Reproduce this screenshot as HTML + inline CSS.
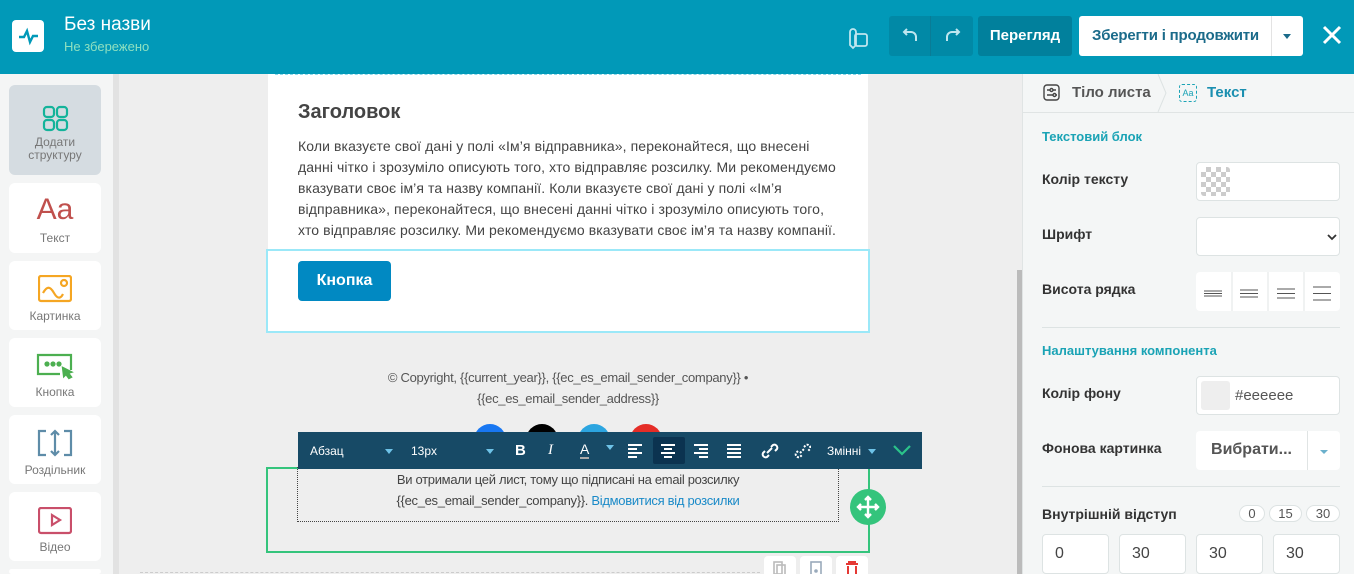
<!DOCTYPE html>
<html><head><meta charset="utf-8"><style>
*{box-sizing:border-box;margin:0;padding:0}
html,body{width:1354px;height:574px;overflow:hidden}
body{position:relative;background:#eee;font-family:"Liberation Sans",sans-serif;}
.abs{position:absolute}
.hdr{left:0;top:0;width:1354px;height:74px;background:#0199b8}
.side{left:0;top:74px;width:113px;height:500px;background:#f4f5f5}
.sb{left:113px;top:74px;width:6px;height:500px;background:#e2e2e2}
.tile{position:absolute;left:9px;width:92px;background:#fff;border-radius:6px;text-align:center;font-size:12px;color:#777}
.tile span{position:absolute;left:0;right:0}
.rp{left:1022px;top:74px;width:332px;height:500px;background:#f4f6f6;border-left:1px solid #e0e4e4}
.lbl{position:absolute;left:1042px;font-size:14px;font-weight:bold;color:#333}
.inp{position:absolute;background:#fff;border:1px solid #dde3e3;border-radius:4px}
.sec{position:absolute;left:1042px;font-size:13px;font-weight:bold;color:#1aa3b5}
</style></head><body>
<div class="abs hdr"></div>
<div class="abs" style="left:12px;top:20px;width:32px;height:32px;background:#fff;border-radius:4px"><svg width="32" height="32"><path d="M7 17h5l3-6 3 11 3-6h5" fill="none" stroke="#0199b8" stroke-width="2.4"/></svg></div>
<div class="abs" style="left:64px;top:14px;color:#fff;font-size:19px">Без назви</div>
<div class="abs" style="left:64px;top:39px;color:#8ee0c0;font-size:13px">Не збережено</div>
<svg class="abs" style="left:846px;top:26px" width="24" height="24"><rect x="9" y="8" width="12" height="12" rx="2" fill="none" stroke="#bfe6ef" stroke-width="1.8"/><path d="M4 6v13l3 3 3-3V6a3 3 0 0 0-6 0z" fill="none" stroke="#bfe6ef" stroke-width="1.8"/></svg>
<div class="abs" style="left:889px;top:16px;width:84px;height:40px;background:#0189a6;border-radius:3px"></div>
<div class="abs" style="left:930px;top:16px;width:1px;height:40px;background:#0a7c96"></div>
<svg class="abs" style="left:902px;top:27px" width="18" height="18" fill="none" stroke="#bfe6ef" stroke-width="2"><path d="M5 2L2 5l3 3M2 5h7a5 5 0 0 1 5 5v4"/></svg>
<svg class="abs" style="left:943px;top:27px" width="18" height="18" fill="none" stroke="#bfe6ef" stroke-width="2"><path d="M13 2l3 3-3 3M16 5H9a5 5 0 0 0-5 5v4"/></svg>
<div class="abs" style="left:978px;top:16px;width:94px;height:40px;background:#01809c;border-radius:3px;color:#fff;font-size:15px;font-weight:bold;text-align:center;line-height:40px">Перегляд</div>
<div class="abs" style="left:1079px;top:16px;width:224px;height:40px;background:#fff;border-radius:3px"></div>
<div class="abs" style="left:1092px;top:27px;color:#1b6b8a;font-size:15px;font-weight:bold;letter-spacing:-0.2px">Зберегти і продовжити</div>
<div class="abs" style="left:1271px;top:16px;width:1px;height:40px;background:#e3e3e3"></div>
<div class="abs" style="left:1283px;top:34px;border:4px solid transparent;border-top:5px solid #1b6b8a"></div>
<svg class="abs" style="left:1322px;top:25px" width="20" height="20"><path d="M2 2L18 18M18 2L2 18" stroke="#fff" stroke-width="3"/></svg>

<div class="abs side"></div><div class="abs sb"></div>
<div class="tile" style="top:85px;height:90px;background:#d5dce1"><svg class="abs" style="left:33px;top:20px" width="27" height="27" fill="none" stroke="#14b39a" stroke-width="2.2"><rect x="2" y="2" width="10" height="10" rx="3"/><rect x="15" y="2" width="10" height="10" rx="3"/><rect x="2" y="15" width="10" height="10" rx="3"/><rect x="15" y="15" width="10" height="10" rx="3"/></svg><span style="top:51px;line-height:13px">Додати<br>структуру</span></div>
<div class="tile" style="top:183px;height:70px"><span style="top:10px;font-size:30px;color:#c0504d">Aa</span><span style="top:48px">Текст</span></div>
<div class="tile" style="top:261px;height:69px"><svg class="abs" style="left:29px;top:14px" width="34" height="28" fill="none" stroke="#f5a623" stroke-width="2.2"><rect x="1" y="1" width="32" height="25" rx="2"/><path d="M5 18c4-7 7-7 11 0s7 5 9 1"/><circle cx="26" cy="8" r="3"/></svg><span style="top:48px">Картинка</span></div>
<div class="tile" style="top:338px;height:69px"><svg class="abs" style="left:27px;top:15px" width="38" height="28" fill="none" stroke="#4caf50" stroke-width="2.2"><path d="M24 21H2V2h33v15"/><circle cx="11" cy="11" r="1.5" fill="#4caf50"/><circle cx="17" cy="11" r="1.5" fill="#4caf50"/><circle cx="23" cy="11" r="1.5" fill="#4caf50"/><path d="M27 15l8 4-3 1 3 4-2 1-3-4-2 2z" fill="#4caf50"/></svg><span style="top:47px">Кнопка</span></div>
<div class="tile" style="top:415px;height:69px"><svg class="abs" style="left:28px;top:14px" width="36" height="28" fill="none" stroke="#5e8ca8" stroke-width="2.2"><path d="M9 2H2v24h7M27 2h7v24h-7M18 2v24M14 6l4-4 4 4M14 22l4 4 4-4"/></svg><span style="top:48px">Роздільник</span></div>
<div class="tile" style="top:492px;height:69px"><svg class="abs" style="left:29px;top:15px" width="34" height="28" fill="none" stroke="#c94f6a" stroke-width="2.2"><rect x="1" y="1" width="32" height="25" rx="2"/><path d="M14 8l8 5-8 5z"/></svg><span style="top:48px">Відео</span></div>
<div class="tile" style="top:569px;height:5px"></div>

<!-- canvas -->
<div class="abs" style="left:268px;top:74px;width:600px;height:176px;background:#fff"></div>
<div class="abs" style="left:275px;top:74px;width:586px;height:2px;border-top:1px dashed #8ed8e8"></div>
<div class="abs" style="left:298px;top:101px;font-size:20px;font-weight:bold;color:#444">Заголовок</div>
<div class="abs" style="left:298px;top:136px;white-space:nowrap;font-size:14px;line-height:21px;color:#444;letter-spacing:0.1px">Коли вказуєте свої дані у полі «Ім’я відправника», переконайтеся, що внесені<br>данні чітко і зрозуміло описують того, хто відправляє розсилку. Ми рекомендуємо<br>вказувати своє ім’я та назву компанії. Коли вказуєте свої дані у полі «Ім’я<br>відправника», переконайтеся, що внесені данні чітко і зрозуміло описують того,<br>хто відправляє розсилку. Ми рекомендуємо вказувати своє ім’я та назву компанії.</div>
<div class="abs" style="left:266px;top:249px;width:604px;height:84px;background:#fff;border:2px solid #9be8f8"></div>
<div class="abs" style="left:298px;top:261px;width:93px;height:40px;background:#0189c2;border-radius:4px;color:#fff;font-weight:bold;font-size:16px;text-align:center;line-height:40px">Кнопка</div>
<div class="abs" style="left:268px;top:367px;width:600px;text-align:center;font-size:13px;line-height:21px;color:#555;letter-spacing:-0.3px">© Copyright, {{current_year}}, {{ec_es_email_sender_company}} •<br>{{ec_es_email_sender_address}}</div>
<div class="abs" style="left:474px;top:424px;width:32px;height:32px;border-radius:50%;background:#1877f2"></div>
<div class="abs" style="left:526px;top:424px;width:32px;height:32px;border-radius:50%;background:#000"></div>
<div class="abs" style="left:578px;top:424px;width:32px;height:32px;border-radius:50%;background:#2ca5e0"></div>
<div class="abs" style="left:630px;top:424px;width:32px;height:32px;border-radius:50%;background:#e52d27"></div>
<div class="abs" style="left:266px;top:467px;width:604px;height:86px;border:2px solid #34c47c;background:#eee"></div>
<div class="abs" style="left:297px;top:467px;width:542px;height:55px;border:1px dotted #444;border-top:none"></div>
<div class="abs" style="left:297px;top:469px;width:542px;text-align:center;font-size:13px;line-height:21px;color:#444;letter-spacing:-0.3px">Ви отримали цей лист, тому що підписані на email розсилку<br>{{ec_es_email_sender_company}}. <span style="color:#1a8ac8">Відмовитися від розсилки</span></div>
<div class="abs" style="left:850px;top:489px;width:36px;height:36px;border-radius:50%;background:#34c47c"><svg width="36" height="36" fill="none" stroke="#fff" stroke-width="2.4"><path d="M18 8v20M8 18h20M15 11l3-3 3 3M15 25l3 3 3-3M11 15l-3 3 3 3M25 15l3 3-3 3"/></svg></div>
<div class="abs" style="left:298px;top:432px;width:624px;height:37px;background:#174a66"></div>
<div class="abs" style="left:310px;top:444px;color:#fff;font-size:12px">Абзац</div>
<div class="abs" style="left:385px;top:449px;border:4px solid transparent;border-top:5px solid #6ec3e8"></div>
<div class="abs" style="left:411px;top:444px;color:#fff;font-size:12px">13px</div>
<div class="abs" style="left:486px;top:449px;border:4px solid transparent;border-top:5px solid #6ec3e8"></div>
<div class="abs" style="left:515px;top:442px;color:#fff;font-size:15px;font-weight:bold">B</div>
<div class="abs" style="left:548px;top:442px;color:#fff;font-size:15px;font-style:italic;font-family:'Liberation Serif',serif">I</div>
<div class="abs" style="left:580px;top:441px;color:#fff;font-size:14px;border-bottom:2px solid #aaa;line-height:16px">A</div>
<div class="abs" style="left:606px;top:445px;border:4px solid transparent;border-top:5px solid #6ec3e8"></div>
<div class="abs" style="left:653px;top:437px;width:32px;height:27px;background:#0b3350;border-radius:2px"></div>
<svg class="abs" style="left:628px;top:443px" width="120" height="16" stroke="#fff" stroke-width="2"><path d="M0 2h14M0 6h9M0 10h14M0 14h9M33 2h14M36 6h8M33 10h14M36 14h8M66 2h14M71 6h9M66 10h14M71 14h9M99 2h14M99 6h14M99 10h14M99 14h14"/></svg>
<svg class="abs" style="left:761px;top:443px" width="50" height="16" fill="none" stroke="#fff" stroke-width="2"><path d="M6 10l5-5M4 8l-2 2a3 3 0 0 0 4 4l2-2M10 4l2-2a3 3 0 0 1 4 4l-2 2"/><path d="M39 10l5-5M37 8l-2 2a3 3 0 0 0 4 4l2-2M43 4l2-2a3 3 0 0 1 4 4l-2 2" stroke-dasharray="2 1.5"/></svg>
<div class="abs" style="left:827px;top:444px;color:#fff;font-size:12px">Змінні</div>
<div class="abs" style="left:868px;top:449px;border:4px solid transparent;border-top:5px solid #6ec3e8"></div>
<svg class="abs" style="left:893px;top:443px" width="18" height="14"><path d="M1 3l8 8 8-8" fill="none" stroke="#2bc48a" stroke-width="2.2"/></svg>
<div class="abs" style="left:764px;top:556px;width:32px;height:18px;background:#fff;border-radius:4px 4px 0 0"><svg width="32" height="18" fill="none" stroke="#bbb" stroke-width="1.6"><rect x="10" y="6" width="8" height="12"/><rect x="13" y="9" width="8" height="10"/></svg></div>
<div class="abs" style="left:800px;top:556px;width:32px;height:18px;background:#fff;border-radius:4px 4px 0 0"><svg width="32" height="18" fill="none" stroke="#9ab" stroke-width="1.6"><rect x="11" y="6" width="10" height="13"/><circle cx="16" cy="15" r="1" fill="#9ab"/></svg></div>
<div class="abs" style="left:836px;top:556px;width:32px;height:18px;background:#fff;border-radius:4px 4px 0 0"><svg width="32" height="18"><path d="M10 8h12M13 8V6h6v2M12 10v10h8V10" fill="none" stroke="#e53935" stroke-width="2"/></svg></div>
<div class="abs" style="left:140px;top:572px;width:620px;border-top:1px dashed #ccc"></div>
<div class="abs" style="left:1017px;top:270px;width:5px;height:304px;background:#bbb"></div>

<!-- right -->
<div class="abs rp"></div>
<div class="abs" style="left:1022px;top:112px;width:332px;height:1px;background:#e0e4e4"></div>
<svg class="abs" style="left:1043px;top:84px" width="18" height="18" fill="none" stroke="#444" stroke-width="1.4"><rect x="1" y="1" width="15" height="15" rx="3"/><path d="M4 6h3M10 6h3M4 11h6M13 11h1"/><circle cx="8.5" cy="6" r="1.5"/><circle cx="11.5" cy="11" r="1.5"/></svg>
<div class="abs" style="left:1072px;top:84px;font-size:15px;font-weight:bold;color:#555">Тіло листа</div>
<svg class="abs" style="left:1156px;top:74px" width="12" height="38"><path d="M2 0l8 19-8 19" fill="none" stroke="#dde3e3"/></svg>
<div class="abs" style="left:1179px;top:84px;width:18px;height:18px;border:1px dashed #1aa3b5;border-radius:3px;font-size:9px;color:#1aa3b5;text-align:center;line-height:16px">Aa</div>
<div class="abs" style="left:1207px;top:84px;font-size:15px;font-weight:bold;color:#1a8fb0">Текст</div>
<div class="sec" style="top:129px">Текстовий блок</div>
<div class="lbl" style="top:171px">Колір тексту</div>
<div class="inp" style="left:1196px;top:162px;width:144px;height:39px"><div class="abs" style="left:4px;top:4px;width:29px;height:29px;border-radius:3px;background:repeating-conic-gradient(#ccc 0 25%,#fff 0 50%) 0 0/10px 10px"></div></div>
<div class="lbl" style="top:226px">Шрифт</div>
<div class="inp" style="left:1196px;top:217px;width:144px;height:39px"><svg class="abs" style="left:130px;top:16px" width="10" height="8"><path d="M1 1l4 4 4-4" fill="none" stroke="#333" stroke-width="1.8"/></svg></div>
<div class="lbl" style="top:281px">Висота рядка</div>
<div class="inp" style="left:1196px;top:272px;width:144px;height:39px;border:none"></div>
<svg class="abs" style="left:1196px;top:272px" width="144" height="39"><path d="M36 0v39M72 0v39M108 0v39" stroke="#e0e4e4"/><path d="M8 19h18M8 21.5h18M8 24h18M44 18h18M44 21.5h18M44 25h18M81 17h18M81 21.5h18M81 26h18M117 15h18M117 21.5h18M117 28h18" stroke="#555"/></svg>
<div class="abs" style="left:1042px;top:327px;width:298px;height:1px;background:#dde3e3"></div>
<div class="sec" style="top:343px">Налаштування компонента</div>
<div class="lbl" style="top:385px">Колір фону</div>
<div class="inp" style="left:1196px;top:376px;width:144px;height:39px"><div class="abs" style="left:4px;top:4px;width:29px;height:29px;border-radius:3px;background:#eee"></div><div class="abs" style="left:38px;top:10px;font-size:15px;color:#555">#eeeeee</div></div>
<div class="lbl" style="top:440px">Фонова картинка</div>
<div class="inp" style="left:1196px;top:431px;width:144px;height:39px;border:none"><div class="abs" style="left:0;width:111px;top:10px;text-align:center;font-size:16px;font-weight:bold;color:#555">Вибрати...</div><div class="abs" style="left:111px;top:0;width:1px;height:39px;background:#e0e4e4"></div><div class="abs" style="left:124px;top:19px;border:4px solid transparent;border-top:4px solid #6ab0cc"></div></div>
<div class="abs" style="left:1042px;top:486px;width:298px;height:1px;background:#dde3e3"></div>
<div class="lbl" style="top:506px">Внутрішній відступ</div>
<div class="inp" style="left:1239px;top:505px;width:26px;height:17px;border-radius:9px;font-size:13px;color:#555;text-align:center;line-height:15px">0</div>
<div class="inp" style="left:1269px;top:505px;width:33px;height:17px;border-radius:9px;font-size:13px;color:#555;text-align:center;line-height:15px">15</div>
<div class="inp" style="left:1306px;top:505px;width:34px;height:17px;border-radius:9px;font-size:13px;color:#555;text-align:center;line-height:15px">30</div>
<div class="inp" style="left:1042px;top:534px;width:67px;height:40px;font-size:16px;color:#444;padding:10px 12px">0</div>
<div class="inp" style="left:1119px;top:534px;width:67px;height:40px;font-size:16px;color:#444;padding:10px 12px">30</div>
<div class="inp" style="left:1196px;top:534px;width:67px;height:40px;font-size:16px;color:#444;padding:10px 12px">30</div>
<div class="inp" style="left:1273px;top:534px;width:67px;height:40px;font-size:16px;color:#444;padding:10px 12px">30</div>
</body></html>
